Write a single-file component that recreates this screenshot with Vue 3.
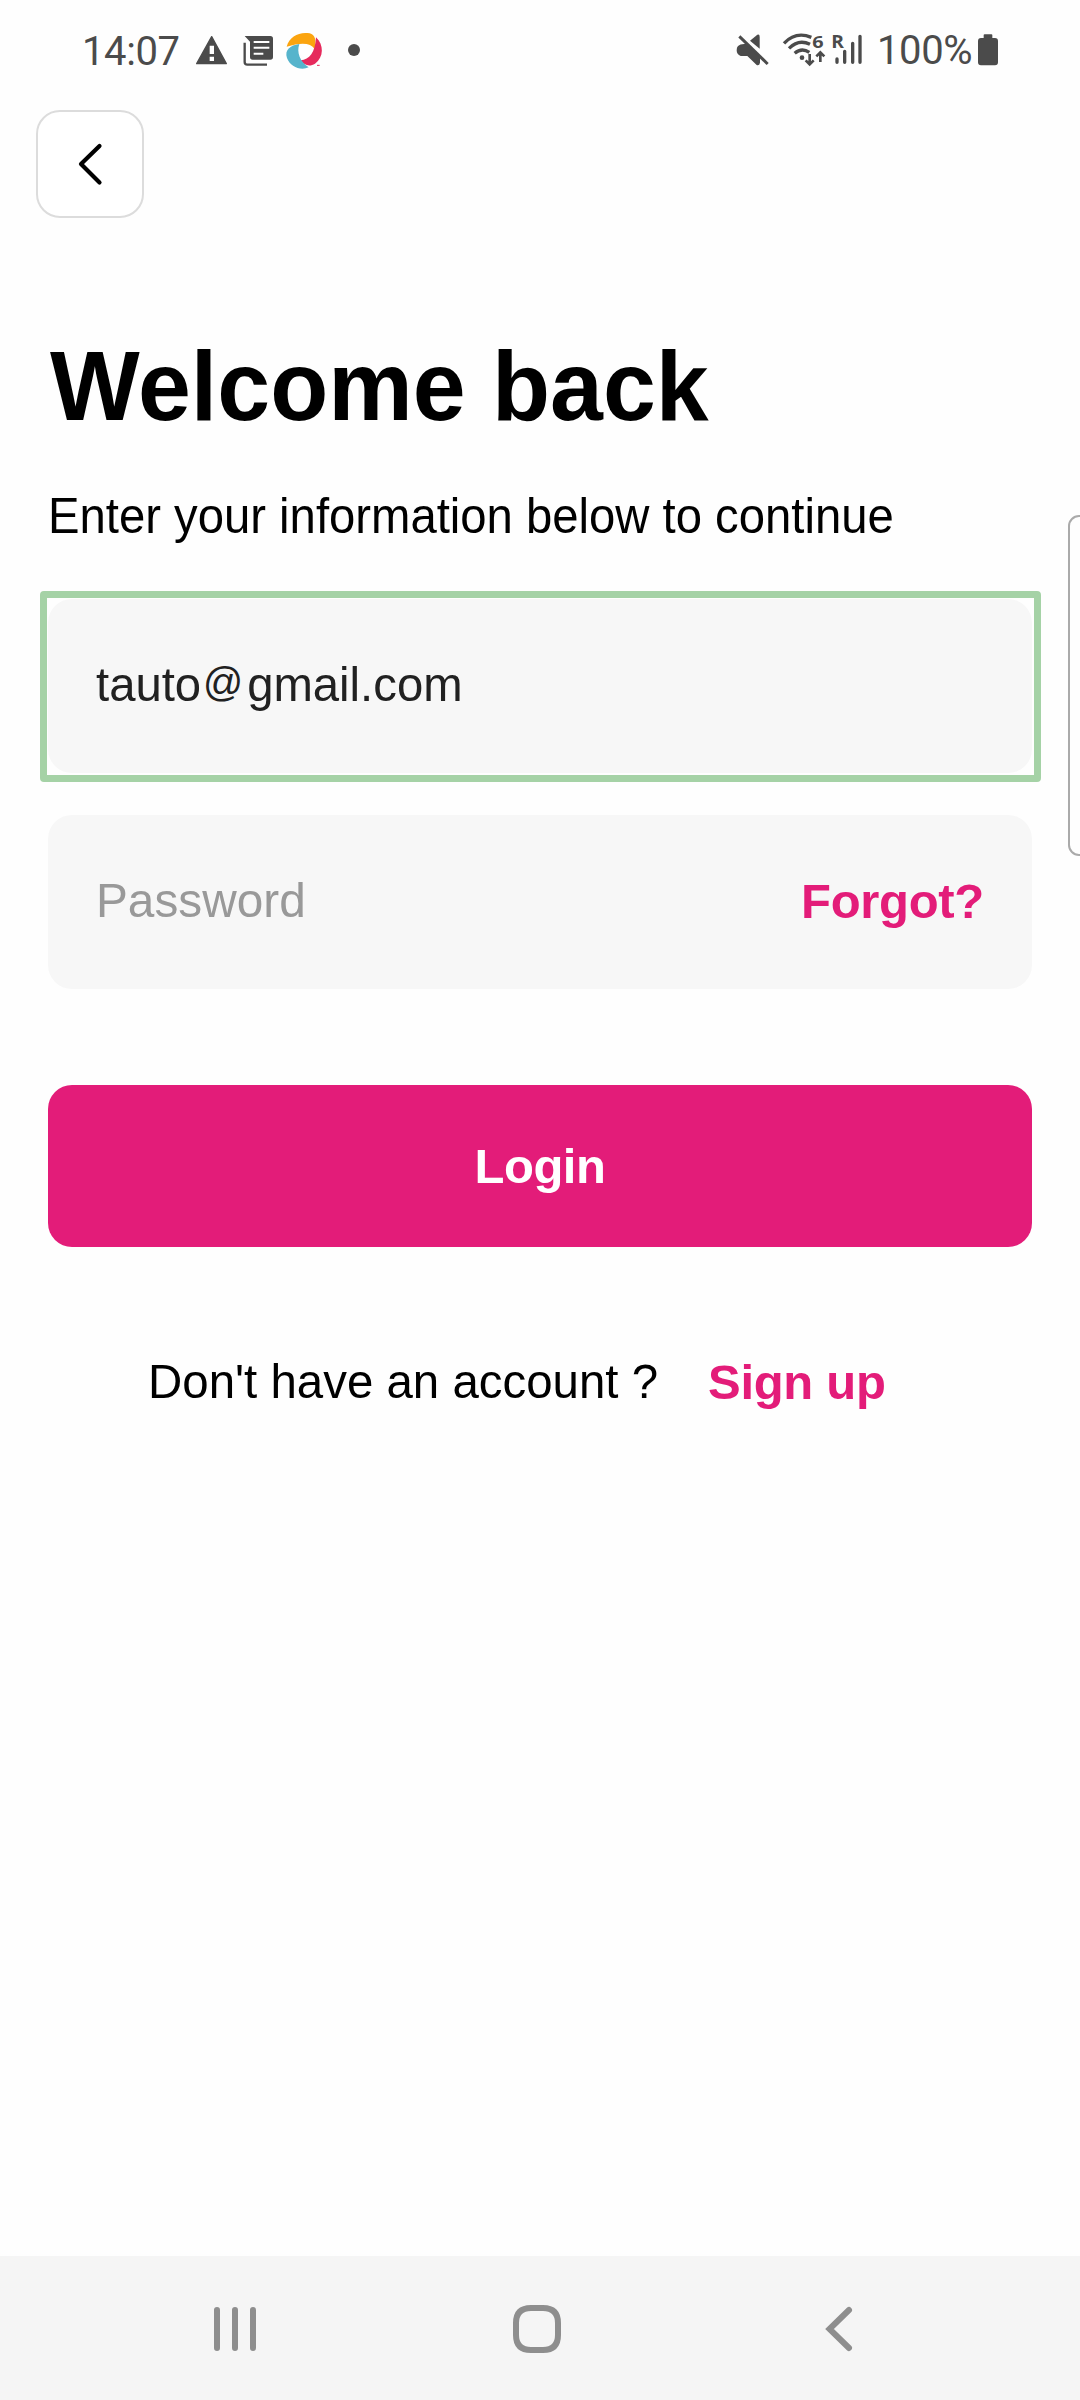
<script setup>
import { ref } from 'vue'

const email = ref('tauto@gmail.com')
const [user, domain] = email.value.split('@')
</script>

<template>
  <main class="screen">
    <header class="status">
      <span class="time">14:07</span>
      <svg class="notices" viewBox="360 0 525 180" width="175" height="60">
        <path d="M425 50 L469 131 H380 Z" fill="#4b4b4b" stroke="#4b4b4b" stroke-width="4" stroke-linejoin="round" />
        <path d="M419 77h13v25h-13zM419 110h13v13h-13z" fill="#fff" />
        <path d="M524 48 H601 Q609 48 609 56 V111 Q609 119 601 119 H548 Q540 119 540 111 V65 Z" fill="#4b4b4b" />
        <path d="M551 66h47M551 83h47M551 101h29" stroke="#fff" stroke-width="6" fill="none" />
        <path d="M524 68 V126 Q524 134 532 134 H591" stroke="#4b4b4b" stroke-width="7" fill="none" />
        <path d="M650 80 C658 48 690 34 719 40 C735 44 740 60 734 87 C722 68 694 66 650 80 Z" fill="#fba40f" />
        <path d="M738 52 C762 74 762 112 735 131 C720 141 702 137 692 121 C718 120 736 96 738 52 Z" fill="#e62a5c" />
        <path d="M688 72 C679 97 690 125 716 142 C692 153 660 140 651 114 C643 90 660 76 688 72 Z" fill="#56b4cc" />
        <circle cx="706" cy="93" r="17" fill="#fff" />
        <path d="M741 136h8" stroke="#e62a5c" stroke-width="3" />
        <circle cx="852" cy="90" r="18" fill="#4b4b4b" />
      </svg>
      <svg class="signals" viewBox="0 0 465 180" width="155" height="60">
        <g fill="#4b4b4b">
          <path d="M90 62 L112 44 Q119 41 119 50 V86 Z" />
          <path d="M54 78 Q60 72 72 72 L82 72 L120 108 V128 Q118 138 110 135 L82 108 H62 Q50 104 50 91 Q50 82 54 78 Z" />
          <circle cx="246" cy="113" r="7" />
          <text class="mini" x="277" y="84" font-size="48" textLength="34" lengthAdjust="spacingAndGlyphs">6</text>
          <text class="mini" x="334" y="84" font-size="53" textLength="38" lengthAdjust="spacingAndGlyphs">R</text>
        </g>
        <g fill="none" stroke="#4b4b4b">
          <path d="M58 49 L143 132" stroke-width="9" />
          <path d="M192 70 Q227 33 274 52" stroke-width="10" />
          <path d="M207 85 Q236 56 270 73" stroke-width="10" />
          <path d="M224 100 Q245 82 268 97" stroke-width="10" />
          <path d="M269 102V133M257 121L269 133L281 121M301 126V97M289 109L301 97L313 109" stroke-width="8" />
          <path d="M351 117V127M374 94V127M398 70V127M420 49V127" stroke-width="10" stroke-linecap="round" />
        </g>
      </svg>
      <span class="charge">100%</span>
      <svg viewBox="768 0 72 180" width="24" height="60">
        <path d="M791 45 Q791 43 794 43 H814 Q817 43 817 45 V54 H825 Q834 54 834 63 V127 Q834 136 825 136 H783 Q774 136 774 127 V63 Q774 54 783 54 H791 Z" fill="#4b4b4b" />
      </svg>
    </header>

    <button class="back" aria-label="Back">
      <svg viewBox="0 0 104 104" width="104" height="104">
        <path d="M61.5 34 L43 52 L61.5 70.5" fill="none" stroke="#000" stroke-width="4.2" stroke-linecap="round" stroke-linejoin="round" />
      </svg>
    </button>

    <section class="content">
      <h1><span class="fit">Welcome back</span></h1>
      <p class="lead"><span class="fit">Enter your information below to continue</span></p>

      <div class="field focused">
        <span class="value fit">{{ user }}<span class="at">@</span>{{ domain }}</span>
      </div>
      <div class="field password">
        <span class="placeholder fit">Password</span>
        <a class="link forgot">Forgot?</a>
      </div>

      <button class="login"><span>Login</span></button>

      <div class="signup">
        <span class="question"><span class="fit">Don't have an account ?</span></span>
        <a class="link">Sign up</a>
      </div>
    </section>

    <nav class="navbar">
      <svg viewBox="0 0 48 48" width="48" height="48">
        <path d="M6 5v38M24 5v38M42 5v38" stroke="#8e8e8e" stroke-width="6" stroke-linecap="round" />
      </svg>
      <svg viewBox="0 0 48 48" width="48" height="48">
        <path d="M18 3 H30 C40 3 45 8 45 18 V30 C45 40 40 45 30 45 H18 C8 45 3 40 3 30 V18 C3 8 8 3 18 3 Z" fill="none" stroke="#8e8e8e" stroke-width="6" />
      </svg>
      <svg viewBox="0 0 48 48" width="48" height="48">
        <path d="M34 5 L14.5 24 L34 43" fill="none" stroke="#8e8e8e" stroke-width="6" stroke-linecap="round" />
      </svg>
    </nav>

    <aside class="edge-handle"></aside>
  </main>
</template>

<style>
body {
  background: #fff;
}
</style>

<style scoped>
.screen {
  position: relative;
  display: flex;
  flex-direction: column;
  width: 1080px;
  height: 2400px;
  overflow: hidden;
  background: #fefefe;
  color: #000;
  font: 49px/60px "Liberation Sans", Arial, sans-serif;
}
.screen * {
  box-sizing: border-box;
}
button {
  padding: 0;
  border: 0;
  font: inherit;
}
svg {
  display: block;
  flex: none;
}
.fit {
  display: inline-block;
  white-space: nowrap;
  transform-origin: left center;
}

.status {
  display: flex;
  height: 110px;
  padding: 20px 80px 0 82px;
  font: 40px/60px Roboto, sans-serif;
  letter-spacing: -0.4px;
  color: #4b4b4b;
}
.time {
  width: 108px;
  padding-top: 2px;
}
.signals {
  margin-left: auto;
  letter-spacing: 0;
}
.charge {
  width: 101px;
  padding: 1px 0 0 2px;
}
.mini {
  font-family: "Open Sans", sans-serif;
  font-weight: 700;
}

.back {
  flex: none;
  width: 108px;
  height: 108px;
  margin-left: 36px;
  border: 2px solid #dcdcdc;
  border-radius: 24px;
  background: #fff;
}

.content {
  display: flex;
  flex-direction: column;
  flex: 1;
  padding: 108px 48px 0;
}
h1 {
  margin: 0;
  padding-left: 2px;
  font-size: 98px;
  line-height: 120px;
}
h1 .fit {
  transform: scaleX(0.97);
}
.lead {
  margin: 40px 0 53px;
  font-size: 50px;
}
.lead .fit {
  transform: scaleX(0.945);
}
.field {
  display: flex;
  align-items: center;
  justify-content: space-between;
  height: 174px;
  padding: 0 48px 4px;
  border-radius: 24px;
  background: #f7f7f7;
}
.focused {
  position: relative;
}
.focused::before {
  content: "";
  position: absolute;
  inset: -8px -9px -9px -8px;
  border: 7px solid #a5d2a6;
  border-radius: 4px;
}
.value {
  color: #212121;
  transform: scaleX(0.965);
}
.at {
  padding: 0 4px 0 2px;
  font-size: 41px;
  line-height: 0;
  vertical-align: 5px;
}
.password {
  margin-top: 42px;
}
.placeholder {
  color: #999;
  transform: scaleX(0.975);
}
.link {
  color: #e31c79;
  font-size: 49px;
  font-weight: 700;
  letter-spacing: -0.3px;
}
.forgot {
  padding-top: 1px;
}
.login {
  height: 162px;
  margin-top: 96px;
  padding-bottom: 1px;
  border-radius: 24px;
  background: #e31c79;
  color: #fff;
  font-size: 49px;
  font-weight: 700;
  letter-spacing: -0.5px;
}
.signup {
  display: flex;
  margin: 104px 0 0 100px;
}
.question {
  width: 560px;
}
.question .fit {
  transform: scaleX(0.968);
}
.signup .link {
  padding-top: 1px;
}

.navbar {
  display: flex;
  align-items: center;
  justify-content: space-between;
  height: 144px;
  padding: 2px 217px 0 211px;
  background: #f5f5f5;
}

.edge-handle {
  position: absolute;
  top: 515px;
  right: -12px;
  width: 24px;
  height: 341px;
  border: 2px solid #aaa;
  border-radius: 11px;
}
</style>
